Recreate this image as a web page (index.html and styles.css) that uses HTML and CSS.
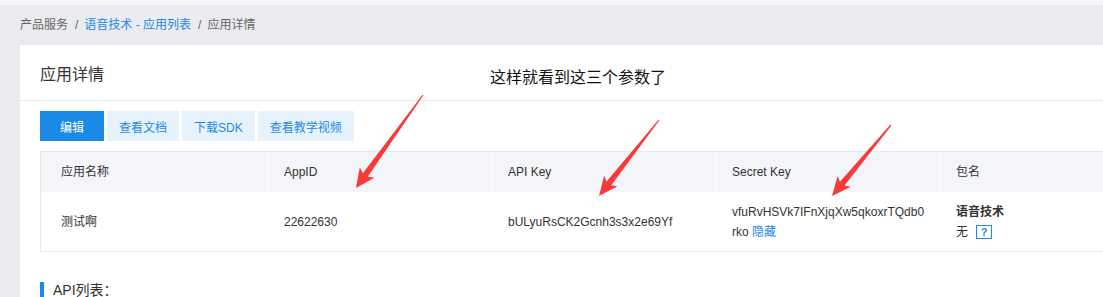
FILE: index.html
```html
<!DOCTYPE html>
<html lang="zh-CN">
<head>
<meta charset="utf-8">
<title>应用详情</title>
<link rel="stylesheet" href="styles.css">
</head>
<body>
<div class="topstrip"></div>
<div class="page">
  <nav class="crumbs">
    <span class="crumb">产品服务</span><span class="sep">/</span><a class="crumb link">语音技术 - 应用列表</a><span class="sep">/</span><span class="crumb">应用详情</span>
  </nav>
  <section class="card">
    <header class="card-head"><h1 class="card-title">应用详情</h1></header>
    <div class="card-body">
      <div class="actions">
        <button class="btn btn-primary">编辑</button>
        <button class="btn btn-light">查看文档</button>
        <button class="btn btn-light">下载SDK</button>
        <button class="btn btn-light">查看教学视频</button>
      </div>
      <div class="table">
        <div class="row row-head">
          <div class="cell first">应用名称</div>
          <div class="cell">AppID</div>
          <div class="cell">API Key</div>
          <div class="cell">Secret Key</div>
          <div class="cell">包名</div>
        </div>
        <div class="row row-body">
          <div class="cell first">测试啊</div>
          <div class="cell">22622630</div>
          <div class="cell">bULyuRsCK2Gcnh3s3x2e69Yf</div>
          <div class="cell secret">vfuRvHSVk7IFnXjqXw5qkoxrTQdb0rko <a class="link">隐藏</a></div>
          <div class="cell pkg">
            <div class="pkg-name">语音技术</div>
            <div class="pkg-val">无 <span class="help">?</span></div>
          </div>
        </div>
      </div>
      <h2 class="section-title">API列表：</h2>
    </div>
  </section>
</div>
<div class="annotation">这样就看到这三个参数了</div>
<svg class="arrows" width="1103" height="297" viewBox="0 0 1103 297">
  <g fill="#f83a3a">
    <polygon transform="translate(423,95) rotate(125.8)" points="0,-0.6 98.6,-3 95.6,-9 114.6,0 95.6,9 98.6,3 0,0.6"/>
    <polygon transform="translate(659,120) rotate(128.3)" points="0,-0.6 80.8,-3 77.8,-8.5 96.8,0 77.8,8.5 80.8,3 0,0.6"/>
    <polygon transform="translate(891,125) rotate(129.7)" points="0,-0.6 76.3,-3 73.3,-8.5 92.3,0 73.3,8.5 76.3,3 0,0.6"/>
  </g>
</svg>
</body>
</html>
```

FILE: styles.css
```css
html, body {
  margin: 0;
  padding: 0;
  overflow: hidden;
}
body {
  background: #e9ebef;
  font-family: "Liberation Sans", "Noto Sans CJK SC", sans-serif;
  font-size: 12px;
  color: #333;
  position: relative;
  width: 1103px;
  height: 297px;
}
.topstrip {
  height: 5px;
  background: #f5f5f5;
}
.page {
  padding-left: 20px;
  width: 1083px;
  overflow: hidden;
}
.crumbs {
  height: 40px;
  line-height: 40px;
  color: #666;
  display: flex;
}
.sep {
  margin: 0 6px 0 7px;
  color: #666;
}
.link {
  color: #1e88e5;
  text-decoration: none;
  cursor: pointer;
}
.card {
  background: #fff;
  height: 252px;
  overflow: hidden;
}
.card-head {
  height: 55px;
  border-bottom: 1px solid #e8eaee;
  display: flex;
  align-items: center;
  padding-left: 20px;
}
.card-title {
  margin: 0;
  font-size: 16px;
  font-weight: normal;
  color: #333;
}
.card-body {
  padding: 10px 20px 20px;
}
.actions {
  display: flex;
  gap: 3px;
}
.btn {
  height: 30px;
  border: none;
  font-family: inherit;
  font-size: 12px;
  padding: 0 12px;
  cursor: pointer;
}
.btn-primary {
  background: #1a8ae6;
  color: #fff;
  width: 64px;
  padding: 0;
}
.btn-light {
  background: #e6f3fd;
  color: #1e88e5;
}
.table {
  margin-top: 10px;
  border: 1px solid #e6e9ee;
  border-right: none;
  width: 1140px;
}
.row {
  display: grid;
  grid-template-columns: 226px 224px 224px 224px 242px;
}
.row-head {
  height: 40px;
  background: #f4f5f9;
}
.row-body {
  height: 59px;
  background: #fff;
}
.cell {
  display: flex;
  align-items: center;
  padding: 0 16px;
  border-left: 1px solid #fff;
  color: #333;
  line-height: 20px;
}
.cell.first {
  border-left: none;
  padding-left: 20px;
}
.cell.secret {
  display: block;
  align-self: center;
  word-break: break-all;
  padding-right: 11px;
}
.cell.pkg {
  flex-direction: column;
  align-items: flex-start;
  justify-content: center;
}
.pkg-name {
  font-weight: bold;
}
.pkg-val {
  display: flex;
  align-items: center;
}
.help {
  display: inline-flex;
  align-items: center;
  justify-content: center;
  width: 14px;
  height: 12px;
  margin-left: 8px;
  border: 1px solid #1e88e5;
  color: #1e88e5;
  font-size: 11px;
  font-weight: bold;
  line-height: 12px;
}
.section-title {
  margin: 30px 0 0;
  border-left: 4px solid #1a8ae6;
  padding-left: 9px;
  font-size: 14px;
  font-weight: normal;
  line-height: 16px;
  color: #333;
}
.annotation {
  position: absolute;
  left: 490px;
  top: 65px;
  font-family: "Noto Sans CJK SC", sans-serif;
  font-size: 16px;
  line-height: 22px;
  color: #111;
}
.arrows {
  position: absolute;
  left: 0;
  top: 0;
  pointer-events: none;
}
```
